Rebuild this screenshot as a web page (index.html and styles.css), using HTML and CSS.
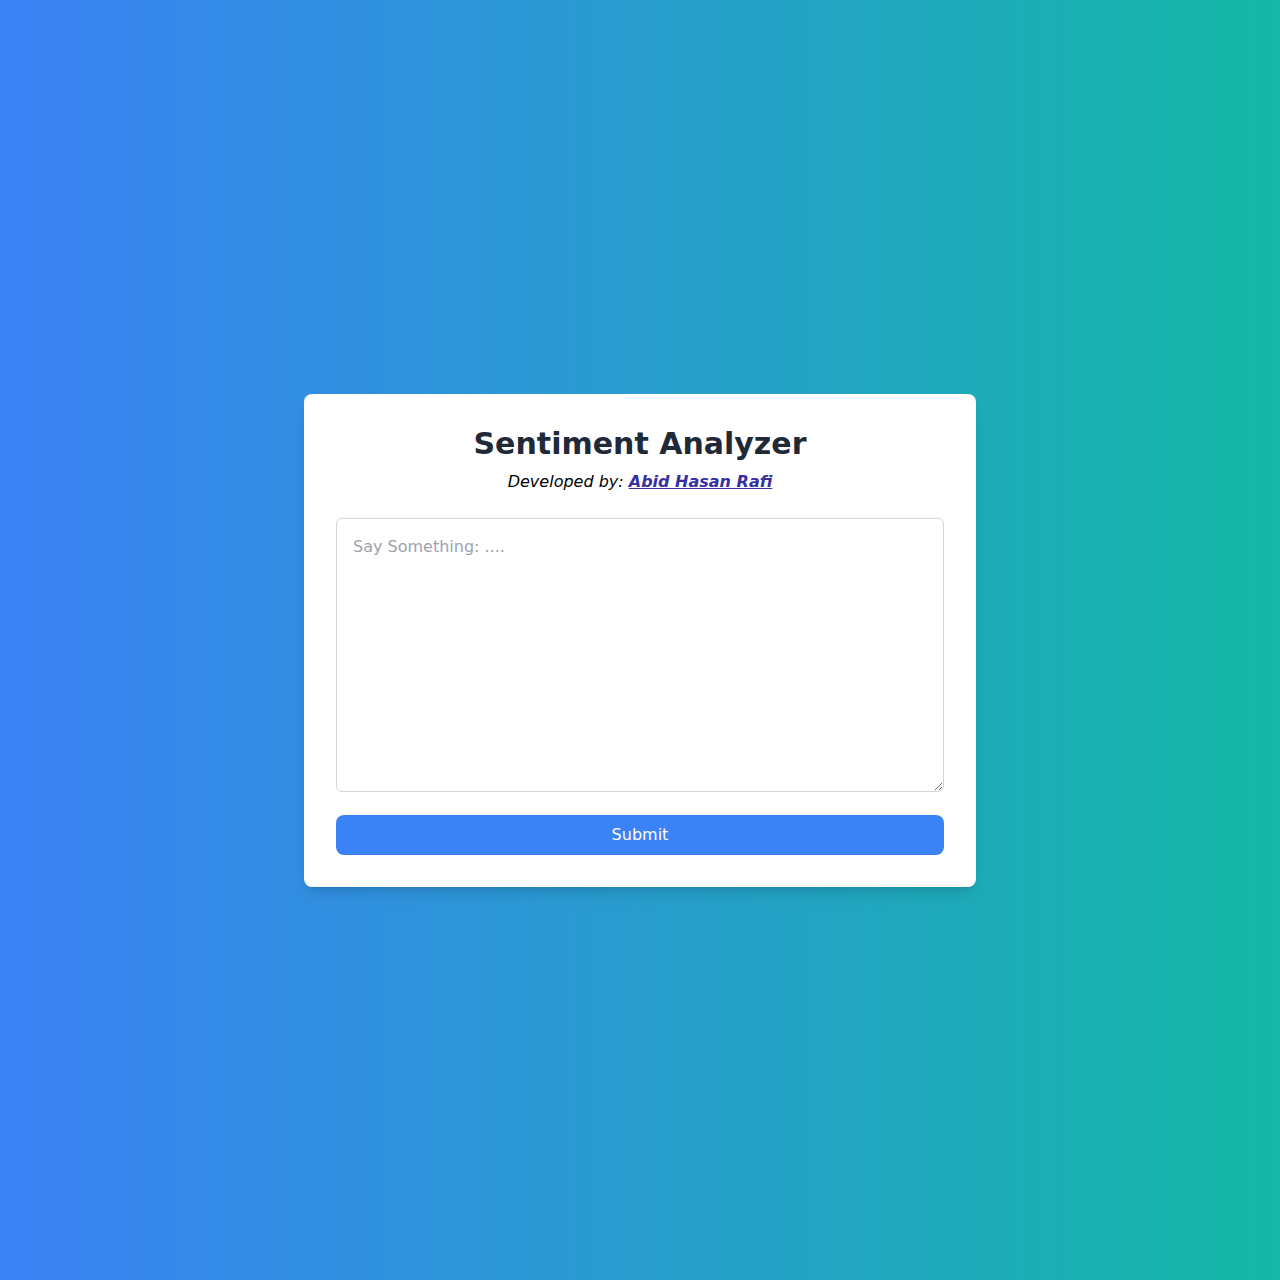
FILE: index.html
```html
<!DOCTYPE html>
<html lang="en">
<head>
<meta charset="utf-8">
<title>Sentiment Analyzer</title>
<link rel="stylesheet" href="styles.css">
</head>
<body>
<main class="card">
  <h1 class="title">Sentiment Analyzer</h1>
  <p class="byline">Developed by: <a class="author" href="#">Abid Hasan Rafi</a></p>
  <form class="form">
    <textarea class="input" rows="10" placeholder="Say Something: ...."></textarea>
    <button type="button" class="submit">Submit</button>
  </form>
</main>
</body>
</html>
```
FILE: styles.css
```css
* { box-sizing: border-box; }
html, body { margin: 0; padding: 0; }
body {
  min-height: 100vh;
  display: flex;
  align-items: center;
  justify-content: center;
  background: linear-gradient(to right, #3b82f6, #14b8a6);
  font-family: "DejaVu Sans", sans-serif;
}
.card {
  width: 672px;
  background: #fff;
  border-radius: 8px;
  padding: 32px;
  box-shadow: 0 10px 15px -3px rgba(0,0,0,0.1), 0 4px 6px -4px rgba(0,0,0,0.1);
}
.title {
  margin: 0 0 8px;
  font-size: 30px;
  line-height: 36px;
  font-weight: 700;
  color: #1f2937;
  text-align: center;
}
.byline {
  margin: 0 0 24px;
  font-size: 16px;
  line-height: 24px;
  font-style: italic;
  color: #000;
  text-align: center;
}
.author {
  color: #3730a3;
  font-weight: 700;
  text-decoration: underline;
}
.form { display: flex; flex-direction: column; }
.input {
  display: block;
  width: 100%;
  padding: 16px;
  border: 1px solid #d1d5db;
  border-radius: 6px;
  font-family: "DejaVu Sans", sans-serif;
  font-size: 16px;
  line-height: 24px;
  color: #1f2937;
  margin: 0 0 23px;
  outline: none;
}
.input::placeholder { color: #9ca3af; }
.submit {
  display: block;
  width: 100%;
  height: 40px;
  border: 0;
  border-radius: 8px;
  background: #3b82f6;
  color: #fff;
  font-family: "DejaVu Sans", sans-serif;
  font-size: 16px;
  cursor: pointer;
}
```
